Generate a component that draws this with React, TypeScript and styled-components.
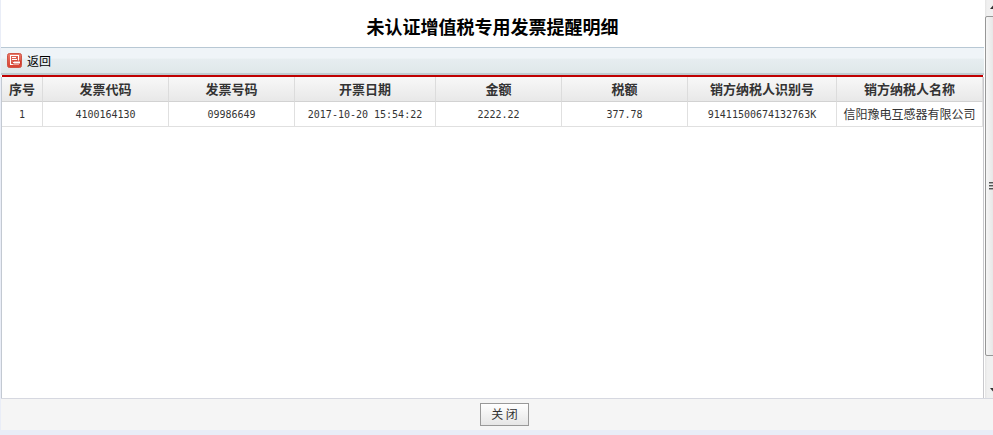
import React from "react";
import styled, { createGlobalStyle } from "styled-components";

const GlobalStyle = createGlobalStyle`
  * { box-sizing: border-box; }
  html, body, #root { height: 100%; }
  body {
    margin: 0;
    background: #e9edf7;
    color: #000;
    font: 12px/16px "Liberation Sans", "Noto Sans CJK SC", sans-serif;
  }
`;

const Page = styled.div`
  display: flex;
  flex-direction: column;
  height: 100%;
  padding: 0 0 5px 1px;
`;

const Viewport = styled.div`
  display: flex;
  flex: 1;
  min-height: 0;
  background: #fff;
`;

const Content = styled.main`
  display: flex;
  flex: 1;
  flex-direction: column;
  min-width: 0;
`;

const Title = styled.h1`
  margin: 0;
  padding: 11px 0 6px;
  font-family: "Noto Sans CJK SC", sans-serif;
  font-size: 18px;
  line-height: 30px;
  font-weight: 700;
  text-align: center;
`;

const Toolbar = styled.div`
  display: flex;
  align-items: center;
  height: 28px;
  padding: 0 6px;
  border-top: 1px solid #b8c8d4;
  border-bottom: 2px solid #bfcbd0;
  background: linear-gradient(#eff4f8 0 40%, #e6edf0 45%, #dfe8e9);
`;

const BackButton = styled.button`
  display: flex;
  align-items: center;
  gap: 4px;
  padding: 0;
  border: 0;
  background: none;
  color: #000;
  font: 12px/16px "Noto Sans CJK SC", sans-serif;
  cursor: pointer;
`;

const Grid = styled.div`
  flex: 1;
  min-height: 0;
  border-left: 1px solid #c3c9d2;
  border-right: 1px solid #c9c9cd;
`;

const Accent = styled.div`
  height: 2px;
  flex: none;
  margin: 0 1px;
  background: #c00000;
`;

const Table = styled.table`
  width: 100%;
  table-layout: fixed;
  border-collapse: separate;
  border-spacing: 0;
  color: #333;
  font-family: "Noto Sans CJK SC", sans-serif;
`;

const Column = styled.col<{ $width?: number }>`
  width: ${({ $width }) => ($width ? `${$width}px` : "auto")};
`;

const HeadCell = styled.th`
  height: 25px;
  padding: 0;
  border-right: 1px solid #dcdcdc;
  border-bottom: 1px solid #d2d2d2;
  background: linear-gradient(#f8f8f8, #e8e8e8);
  font-size: 13px;
  line-height: 16px;
  font-weight: 700;
  white-space: nowrap;
`;

const Cell = styled.td<{ $code?: boolean }>`
  height: 25px;
  padding: ${({ $code }) => ($code ? "2px 0 0" : "0")};
  border-right: 1px solid #e0e0e0;
  border-bottom: 1px solid #e0e0e0;
  font-family: ${({ $code }) => ($code ? `"DejaVu Sans Mono", monospace` : "inherit")};
  font-size: ${({ $code }) => ($code ? 10 : 12)}px;
  line-height: 16px;
  text-align: center;
  white-space: nowrap;
`;

const ScrollRail = styled.div`
  display: flex;
  flex: none;
  flex-direction: column;
  width: 9px;
  padding-left: 1px;
  overflow: hidden;
  background: linear-gradient(90deg, #fff 1px, #e3e3e3 1px, #f0f0f0 3px);
`;

const ScrollArrow = styled.div<{ $down?: boolean }>`
  display: flex;
  justify-content: center;
  align-items: ${({ $down }) => ($down ? "flex-end" : "flex-start")};
  width: 17px;
  height: 16px;
  padding: ${({ $down }) => ($down ? "0 0 6px" : "5px 0 0")};
`;

const ScrollTrack = styled.div`
  flex: 1;
  width: 17px;
`;

const ScrollThumb = styled.div`
  display: flex;
  flex-direction: column;
  align-items: center;
  justify-content: center;
  gap: 1px;
  height: 93%;
  border: 1px solid #979797;
  border-radius: 2px;
  background: linear-gradient(90deg, #f6f6f6, #e6e6e6 50%, #cfcfcf);
`;

const GripLine = styled.div`
  width: 9px;
  height: 2px;
  border-top: 1px solid #555;
  background: #aaa;
`;

const Footer = styled.footer`
  display: flex;
  flex: none;
  align-items: flex-start;
  justify-content: center;
  height: 32px;
  padding: 4px 0 4px 15px;
  border-top: 1px solid #d6d8e0;
  background: #f5f5f5;
`;

const CloseButton = styled.button`
  width: 49px;
  height: 23px;
  padding: 0 0 2px;
  border: 1px solid #999;
  background: linear-gradient(#fff, #e6e6e6);
  color: #333;
  font: 12px/16px "Noto Sans CJK SC", sans-serif;
  cursor: pointer;
`;

const columns: { label: string; width?: number; code?: boolean }[] = [
  { label: "序号", width: 41, code: true },
  { label: "发票代码", width: 126, code: true },
  { label: "发票号码", width: 126, code: true },
  { label: "开票日期", width: 141, code: true },
  { label: "金额", width: 126, code: true },
  { label: "税额", width: 126, code: true },
  { label: "销方纳税人识别号", width: 149, code: true },
  { label: "销方纳税人名称" },
];

const rows = [
  ["1", "4100164130", "09986649", "2017-10-20 15:54:22", "2222.22", "377.78", "91411500674132763K", "信阳豫电互感器有限公司"],
];

function ReturnIcon() {
  return (
    <svg width="16" height="16" viewBox="0 0 16 16" aria-hidden="true">
      <defs>
        <linearGradient id="returnFill" x1="0" y1="0" x2="0" y2="1">
          <stop offset="0" stopColor="#ea7a6a" />
          <stop offset="1" stopColor="#d8402f" />
        </linearGradient>
      </defs>
      <rect x="0.5" y="0.5" width="14" height="14" rx="2" fill="url(#returnFill)" stroke="#cf5446" />
      <rect x="3.5" y="2.5" width="8" height="9" fill="#dd5f50" stroke="#fff" />
      <path d="M5 4.5h4M5 6.5h5M5 8.5h1" stroke="#fff" />
      <path d="M6 7.500h8v4H6L4.500 9.500z" fill="#cf3a2b" />
      <path d="M5.500 9.500L7 8.500h6v2H7z" fill="#fff" />
    </svg>
  );
}

export default function App() {
  return (
    <>
      <GlobalStyle />
      <Page>
        <Viewport>
          <Content>
            <Title>未认证增值税专用发票提醒明细</Title>
            <Toolbar>
              <BackButton type="button">
                <ReturnIcon />
                返回
              </BackButton>
            </Toolbar>
            <Accent />
            <Grid>
              <Table>
                <colgroup>
                  {columns.map((c) => (
                    <Column key={c.label} $width={c.width} />
                  ))}
                </colgroup>
                <thead>
                  <tr>
                    {columns.map((c) => (
                      <HeadCell key={c.label} scope="col">{c.label}</HeadCell>
                    ))}
                  </tr>
                </thead>
                <tbody>
                  {rows.map((row) => (
                    <tr key={row[0]}>
                      {row.map((value, i) => (
                        <Cell key={columns[i].label} $code={columns[i].code}>{value}</Cell>
                      ))}
                    </tr>
                  ))}
                </tbody>
              </Table>
            </Grid>
          </Content>
          <ScrollRail aria-hidden="true">
            <ScrollArrow>
              <svg width="7" height="4" viewBox="0 0 7 4"><path d="M0 4L3.5 0 7 4z" fill="#333" /></svg>
            </ScrollArrow>
            <ScrollTrack>
              <ScrollThumb>
                <GripLine />
                <GripLine />
                <GripLine />
              </ScrollThumb>
            </ScrollTrack>
            <ScrollArrow $down>
              <svg width="7" height="4" viewBox="0 0 7 4"><path d="M0 0h7L3.5 4z" fill="#333" /></svg>
            </ScrollArrow>
          </ScrollRail>
        </Viewport>
        <Footer>
          <CloseButton type="button">关 闭</CloseButton>
        </Footer>
      </Page>
    </>
  );
}
